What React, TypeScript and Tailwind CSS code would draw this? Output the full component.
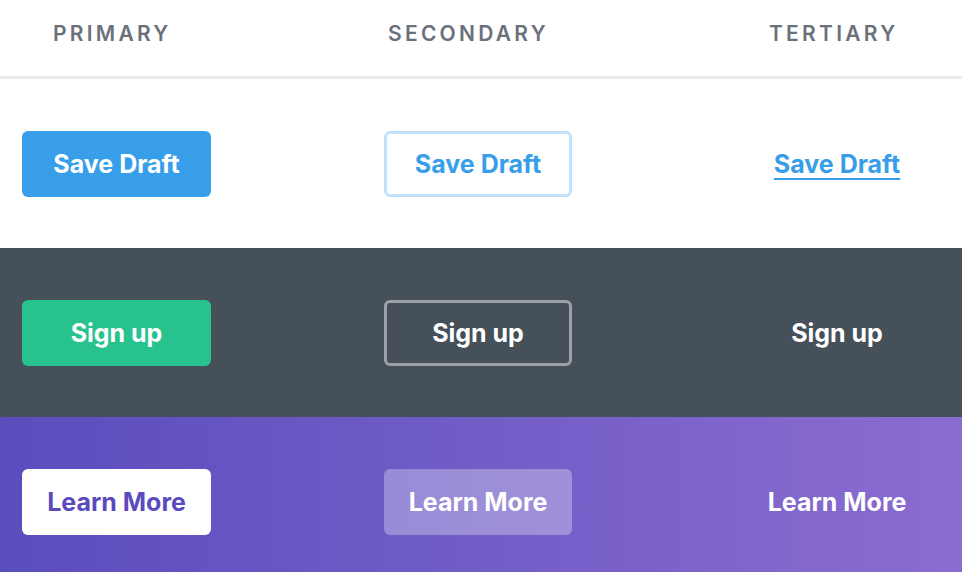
import React from 'react';

const font = { fontFamily: 'Inter, Lato, sans-serif' };

const Row: React.FC<{ className: string; children: React.ReactNode }> = ({ className, children }) => (
  <div className={`h-[169px] flex items-center ${className}`}>{children}</div>
);

export default function App() {
  return (
    <div className="w-[962px] h-[572px] overflow-hidden bg-white" style={font}>
      {/* Header */}
      <div className="h-[79px] border-b-[3px] border-[#ececef] flex items-center pb-[8px] text-[21px] font-semibold tracking-[0.155em] text-[#6b717b]">
        <div className="ml-[53px] w-[335px]">PRIMARY</div>
        <div className="w-[381px]">SECONDARY</div>
        <div>TERTIARY</div>
      </div>

      {/* Light row */}
      <Row className="bg-white">
        <button className="ml-[22px] w-[189px] h-[66px] pt-[2px] rounded-[6px] bg-[#389eea] text-white text-[25px] font-bold">
          Save Draft
        </button>
        <button className="ml-[173px] w-[188px] h-[66px] pt-[2px] rounded-[6px] border-[3px] border-[#c0e2fb] bg-white text-[#389eea] text-[25px] font-bold">
          Save Draft
        </button>
        <div className="ml-[170px] w-[190px] pt-[2px] text-center">
          <span className="text-[25px] font-bold text-[#389eea] underline decoration-2 underline-offset-[5px]">
            Save Draft
          </span>
        </div>
      </Row>

      {/* Dark row */}
      <Row className="bg-[#465059]">
        <button className="ml-[22px] w-[189px] h-[66px] pt-[2px] rounded-[6px] bg-[#28c28f] text-white text-[25px] font-bold">
          Sign up
        </button>
        <button className="ml-[173px] w-[188px] h-[66px] pt-[2px] rounded-[6px] border-[3px] border-[#9ca1a7] text-white text-[25px] font-bold">
          Sign up
        </button>
        <div className="ml-[170px] w-[190px] pt-[2px] text-center text-white text-[25px] font-bold">Sign up</div>
      </Row>

      {/* Purple row */}
      <Row className="bg-linear-to-r from-[#5a4dbd] to-[#8b6cd0]">
        <button className="ml-[22px] w-[189px] h-[66px] pt-[2px] rounded-[6px] bg-white text-[#5a4bbd] text-[25px] font-bold">
          Learn More
        </button>
        <button className="ml-[173px] w-[188px] h-[66px] pt-[2px] rounded-[6px] bg-white/30 text-white text-[25px] font-bold">
          Learn More
        </button>
        <div className="ml-[170px] w-[190px] pt-[2px] text-center text-white text-[25px] font-bold">Learn More</div>
      </Row>
    </div>
  );
}
